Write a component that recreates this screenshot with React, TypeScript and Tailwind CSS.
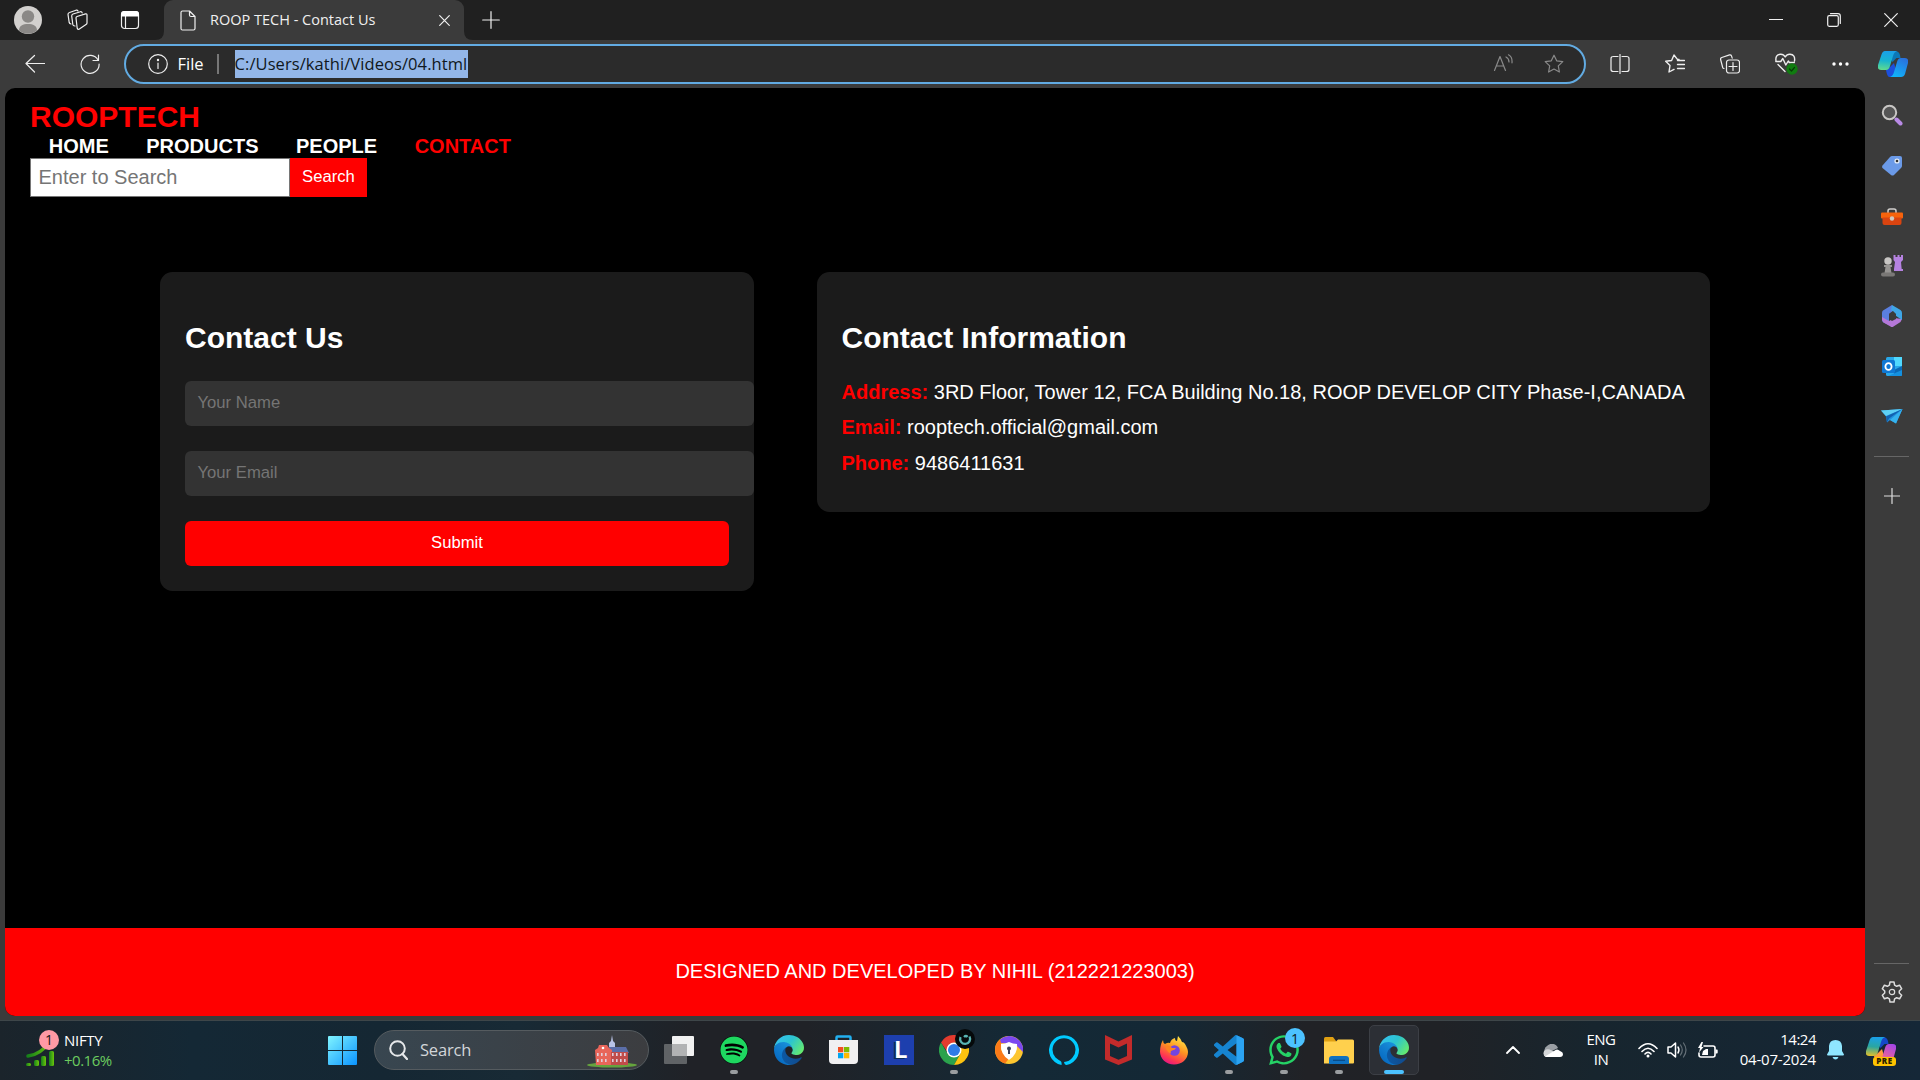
import React from "react";
import { FaSpotify, FaWhatsapp } from "react-icons/fa";

type IconProps = { w?: number; h?: number; box?: string; className?: string; children: React.ReactNode };

function Icon({ w = 20, h = 20, box = "0 0 20 20", className = "", children }: IconProps) {
  return (
    <svg width={w} height={h} viewBox={box} fill="none" stroke="currentColor" strokeWidth={1.2} strokeLinecap="round" strokeLinejoin="round" className={"block shrink-0 " + className}>
      {children}
    </svg>
  );
}

function EdgeLogo({ id }: { id: string }) {
  return (
    <svg width="30" height="30" viewBox="4.63 4.63 256 256" className="block">
      <defs>
        <linearGradient id={id + "a"} x1="0" x2="1"><stop offset="0" stopColor="#0c59a4" /><stop offset="1" stopColor="#114a8b" /></linearGradient>
        <linearGradient id={id + "b"} x1="1" y1="0" x2=".3" y2="1"><stop offset="0" stopColor="#1b9de2" /><stop offset=".5" stopColor="#127fd0" /><stop offset="1" stopColor="#0669c0" /></linearGradient>
        <linearGradient id={id + "c"} x1="0" y1=".2" x2="1" y2=".7"><stop offset="0" stopColor="#35c1f1" /><stop offset=".5" stopColor="#2cc4cf" /><stop offset="1" stopColor="#66eb6e" /></linearGradient>
      </defs>
      <path fill={`url(#${id}a)`} d="M235.68 195.46a93.73 93.73 0 0 1-10.54 4.71 101.87 101.87 0 0 1-35.9 6.46c-47.32 0-88.54-32.55-88.54-74.32A31.48 31.48 0 0 1 117.13 105c-42.8 1.8-53.8 46.4-53.8 72.53 0 73.88 68.09 81.37 82.76 81.37 7.91 0 19.84-2.3 27-4.56l1.31-.44a128.34 128.34 0 0 0 66.6-52.8 4 4 0 0 0-5.32-5.64z" />
      <path fill={`url(#${id}b)`} d="M110.34 246.34A79.2 79.2 0 0 1 87.6 225a80.72 80.72 0 0 1 29.53-120c3.12-1.47 8.45-4.13 15.54-4a32.35 32.35 0 0 1 25.69 13 31.88 31.88 0 0 1 6.36 18.66c0-.21 24.46-79.6-80-79.6-43.9 0-80 41.66-80 78.21a130.15 130.15 0 0 0 12.11 56 128 128 0 0 0 156.38 67.11 75.55 75.55 0 0 1-62.78-8z" />
      <path fill={`url(#${id}c)`} d="M156.94 153.78c-.81 1.05-3.3 2.5-3.3 5.66 0 2.61 1.7 5.12 4.72 7.23 14.38 10 41.49 8.68 41.56 8.68a59.56 59.56 0 0 0 30.27-8.35 61.38 61.38 0 0 0 30.43-52.88c.26-22.41-8-37.31-11.34-43.91C228.09 28.76 182.35 4.63 132.61 4.63a128 128 0 0 0-128 126.2c.48-36.54 36.8-66.05 80-66.05 3.5 0 23.46.34 42 10.07 16.34 8.58 24.9 18.94 30.85 29.21 6.18 10.67 7.28 24.15 7.28 29.52s-2.74 13.33-7.8 20.19z" />
    </svg>
  );
}

function CopilotLogo({ id, pre }: { id: string; pre?: boolean }) {
  return (
    <svg width="30" height="27" viewBox="0 0 30 27" className="block">
      <defs>
        <linearGradient id={id + "l"} x1=".3" y1="0" x2=".2" y2="1"><stop offset="0" stopColor="#1aa0e8" /><stop offset=".5" stopColor={pre ? "#2aa6a0" : "#18b4cf"} /><stop offset="1" stopColor={pre ? "#e6c028" : "#62dc8c"} /></linearGradient>
        <linearGradient id={id + "r"} x1=".8" y1="0" x2=".3" y2="1"><stop offset="0" stopColor={pre ? "#a445e8" : "#2a6fdc"} /><stop offset="1" stopColor={pre ? "#ff6c80" : "#10b4fa"} /></linearGradient>
      </defs>
      <path d="M15 0h3q4 .5 4.500 7h-4l-4 4-3-5z" fill={pre ? "#1548c8" : "#0b78b8"} />
      <path d="M8 19l4-3 4-4 2 7-3 7h-4q-2-1-3-7z" fill={pre ? "#ff9a3c" : "#1c4fdc"} />
      <path d="M7 0h12q-3 1-4 5l-3 10q-1 4-4 4H3q-4 0-3-5L3.500 3.500Q4.500 0 7 0z" fill={`url(#${id}l)`} />
      <path d="M23 26H12q3-1 4-5l3-10q1-4 4-4h4q4 0 3 5l-3 11q-1 3-4 3z" fill={`url(#${id}r)`} />
    </svg>
  );
}

function TabStrip() {
  return (
    <div className="flex h-10 bg-[#202020] text-[#f0f0f0]">
      <div className="flex w-[164px] items-center">
        <svg width="28" height="28" viewBox="0 0 28 28" className="ml-3.5 mr-[25px] block">
          <circle cx="14" cy="14" r="14" fill="#d2d0ce" />
          <circle cx="14" cy="10.500" r="6.200" fill="#8a8886" />
          <path d="M5 24.500c0-5 4-6.500 9-6.500s9 1.500 9 6.500a14 14 0 0 1-18 0z" fill="#8a8886" />
        </svg>
        <Icon w={22} h={22} box="0 0 22 22">
          <path d="M10 7.500l8.500-2.600q1.500-.3 1.500 1.100v8q0 1-1 1.600l-7 4.600q-1.500.5-1.800-1L9 9q0-1.100 1-1.500z" />
          <path d="M8 17q-2-.2-2.200-1.500L4.700 7q0-1.500 1.300-2l7.500-2.300q1.300-.2 1.700 1.200M4 15q-1.500-.2-1.800-1.500L1 5.500Q.9 4 2.500 3.500L9 1.200q1.400-.4 2 .8" />
        </Icon>
        <Icon w={20} h={20} className="ml-[31px]" box="0 0 20 20">
          <rect x="1.500" y="1.500" width="17" height="17" rx="3" />
          <path d="M5.500 6v12" />
          <path d="M4 1h12q3 0 3 3v2.500H1V4q0-3 3-3z" fill="#fff" stroke="none" />
        </Icon>
      </div>
      <div className="relative flex w-[300px] items-center rounded-t-[9px] bg-[#3b3b3b] pl-4">
        <svg width="9" height="9" className="absolute -left-[9px] bottom-0"><path d="M9 0v9H0q9 0 9-9z" fill="#3b3b3b" /></svg>
        <svg width="9" height="9" className="absolute -right-[9px] bottom-0"><path d="M0 0v9h9q-9 0-9-9z" fill="#3b3b3b" /></svg>
        <Icon w={16} h={21} box="0 0 16 21"><path d="M2.500 1h7l5.500 5.500v12q0 1.500-1.500 1.500h-11Q1 20 1 18.500v-16Q1 1 2.500 1zM9.500 1v4q0 1.500 1.500 1.500h4" /></Icon>
        <span className="ml-3.5 w-[233px] whitespace-nowrap font-['Open_Sans',sans-serif] text-[14.500px]">ROOP TECH - Contact Us</span>
        <Icon w={11} h={11} box="0 0 11 11" className="-ml-1"><path d="M.7.7l9.600 9.600M10.300.7L.7 10.300" /></Icon>
      </div>
      <div className="flex flex-1 items-center pl-[18px]">
        <Icon w={18} h={18} box="0 0 18 18"><path d="M9 .7v16.600M.7 9h16.600" /></Icon>
      </div>
      <div className="flex w-[173px] items-center">
        <div className="flex w-[58px] justify-center"><Icon w={14} h={14} box="0 0 14 14"><path d="M.5 6.500h13" /></Icon></div>
        <div className="flex w-[57px] justify-center"><Icon w={14} h={14} box="0 0 14 14"><rect x=".7" y="2.700" width="10.600" height="10.600" rx="1.500" /><path d="M3.500.7H11q2.300 0 2.300 2.300v7.500" /></Icon></div>
        <div className="flex w-[58px] justify-center"><Icon w={14} h={14} box="0 0 14 14"><path d="M.7.7l12.600 12.600M13.300.7L.7 13.300" /></Icon></div>
      </div>
    </div>
  );
}

const star = "M10 1.200l2.700 5.600 6.100.8-4.500 4.300 1.100 6.100-5.400-3-5.400 3 1.100-6.100L1.200 7.600l6.100-.8z";

function Toolbar() {
  return (
    <div className="flex h-12 items-center bg-[#3b3b3b] text-[#eee]">
      <div className="flex w-[124px] items-center pl-[25px]">
        <Icon><path d="M9.500 1.500L1 9.500l8.500 8.500M1 9.500h18.500" /></Icon>
        <Icon className="ml-[35px]"><path d="M18 6a9 9 0 1 0 1.100 4M18.500 1v5.500H13" /></Icon>
      </div>
      <div className="flex h-10 w-[1462px] items-center rounded-full border-2 border-[#62abe2] bg-[#2b2b2b] pl-[21.500px] font-['Open_Sans',sans-serif] text-[16.500px]">
        <Icon><circle cx="10" cy="10" r="9.300" /><path d="M10 9v5.500" /><circle cx="10" cy="6" r=".6" fill="#fff" /></Icon>
        <span className="ml-[10px] w-[39px] text-white">File</span>
        <div className="mr-4 h-5 w-0.5 bg-[#777]" />
        <span className="h-7 w-[233px] whitespace-nowrap bg-[#93b6e8] leading-7 tracking-[0.08px] text-[#101820]">C:/Users/kathi/Videos/04.html</span>
        <div className="ml-auto flex items-center gap-[31px] pr-[20px] text-[#8a8a8a]">
          <Icon w={20} h={20}><path d="M1.500 16.500L7 2.500l5.500 14M3.500 12h7M13 3q3 1.500 3 5M15.500 .8q4 2 3.500 8" /></Icon>
          <Icon><path d={star} /></Icon>
        </div>
      </div>
      <div className="flex flex-1">
        <div className="flex w-[55px] items-center pl-[23.500px]"><Icon><path d="M8 2.500H3.500q-2.500 0-2.500 2v11q0 2 2.500 2H8M12 2.500h4.500q2.500 0 2.500 2v11q0 2-2.500 2H12M10 .5v19" /></Icon></div>
        <div className="flex w-[55px] items-center pl-6"><Icon><path d="M14 5.500l-1.800-.3L9 1 6.600 6.500l-5.900.8L5 11.500 4 18l5-2.600M12.500 6.500h7M12.500 10.500h7M12.500 14.500h7" strokeWidth="1.400" /></Icon></div>
        <div className="flex w-[55px] items-center pl-6"><Icon><path d="M4 14.500q-1 0-1.300-1L.6 5.500Q.3 4 1.800 3.500L9.500.9q1.500-.3 2 1l.7 2.300" /><rect x="6.500" y="6" width="13" height="13" rx="2.500" /><path d="M13 8.500v8M9 12.500h8" /></Icon></div>
        <div className="flex w-[55px] items-center pl-6">
          <Icon w={23} h={22} box="0 0 23 22"><path d="M.8 8.500h5l2-3 3 6.500 2.500-4 1 1.500h5M1 8Q0 1.500 5.500 1.200 8.500 1 10.200 4 12 1 15 1.200 20.500 1.500 19.500 8M3 11.500l7 7" strokeWidth="1.400" /><circle cx="17" cy="16" r="5.700" fill="#107c10" stroke="none" /><path d="M14.500 16l2 2 3-3.500" stroke="#063d06" /></Icon>
        </div>
        <div className="flex w-[57px] items-center pl-[26px]"><svg width="17" height="4" className="block"><circle cx="2" cy="2" r="1.700" fill="#fff" /><circle cx="8.500" cy="2" r="1.700" fill="#fff" /><circle cx="15" cy="2" r="1.700" fill="#fff" /></svg></div>
        <div className="flex items-center pl-[15px]"><CopilotLogo id="cp1" /></div>
      </div>
    </div>
  );
}

function Page() {
  return (
    <main className="flex h-[928px] w-[1860px] flex-col overflow-hidden rounded-[10px] bg-black font-['Liberation_Sans',Arial,sans-serif] text-[20px] text-white">
      <header className="flex flex-col pl-[25px] pt-[12px]">
        <div className="h-[35px] text-[30px] font-bold leading-[34px] text-[#ff0000]">ROOPTECH</div>
        <nav className="flex h-[23px] gap-[37.500px] pl-[18.750px] font-bold leading-[22px]">
          <a>HOME</a><a>PRODUCTS</a><a>PEOPLE</a><a className="text-[#ff0000]">CONTACT</a>
        </nav>
        <div className="flex h-[39px]">
          <div className="w-[260px] border border-[#767676] bg-white pl-[7.500px] leading-[36px] text-[#757575]">Enter to Search</div>
          <button className="w-[77px] bg-[#ff0000] pb-[2px] text-[16.670px] leading-[37px] text-white">Search</button>
        </div>
      </header>
      <section className="mt-[75px] flex items-start gap-[63px] pl-[155px]">
        <div className="h-[319px] w-[594px] rounded-[12.500px] bg-[#1b1b1b] pl-[25px] pt-[48px]">
          <h2 className="h-[35px] text-[30px] font-bold leading-[35px]">Contact Us</h2>
          <div className="mt-[26px] flex flex-col gap-[25px] text-[16.670px] leading-[43px]">
            <div className="h-[45px] rounded-[6px] bg-[#333] pl-[12.500px] text-[#757575]">Your Name</div>
            <div className="h-[45px] rounded-[6px] bg-[#333] pl-[12.500px] text-[#757575]">Your Email</div>
            <button className="h-[45px] w-[544px] rounded-[6px] bg-[#ff0000] pb-0.5 text-center leading-[43px]">Submit</button>
          </div>
        </div>
        <div className="h-[240px] w-[893px] rounded-[12.500px] bg-[#1b1b1b] pl-[24.500px] pt-[48px]">
          <h2 className="h-[35px] text-[30px] font-bold leading-[35px]">Contact Information</h2>
          <div className="mt-[20px] whitespace-nowrap leading-[35.500px]">
            <p className="h-[35px]"><b className="text-[#ff0000]">Address:</b> 3RD Floor, Tower 12, FCA Building No.18, ROOP DEVELOP CITY Phase-I,CANADA</p>
            <p className="h-[36px]"><b className="text-[#ff0000]">Email:</b> rooptech.official@gmail.com</p>
            <p><b className="text-[#ff0000]">Phone:</b> 9486411631</p>
          </div>
        </div>
      </section>
      <footer className="mt-auto h-[88px] bg-[#ff0000] text-center leading-[87px]">DESIGNED AND DEVELOPED BY NIHIL (212221223003)</footer>
    </main>
  );
}

function Sidebar() {
  return (
    <aside className="flex flex-1 flex-col items-center pr-[2px] pt-[2px] text-[#ddd]">
      <div className="flex h-[50px] items-center">
        <svg width="22" height="22" viewBox="0 0 22 22"><circle cx="8.500" cy="8.500" r="6.700" fill="#555" stroke="#c8c6c4" strokeWidth="2" /><path d="M15.500 15.500l4 4" stroke="#b98ae6" strokeWidth="4" strokeLinecap="round" /></svg>
      </div>
      <div className="flex h-[52px] items-center">
        <svg width="22" height="22" viewBox="0 0 22 22"><path d="M11 1h8q2 0 2 2v8q0 1-1 2l-7 7q-1.500 1-3 0L1.500 13q-1-1 0-2.500L9 2q1-1 2-1z" fill="#6b9ae8" /><circle cx="16" cy="6" r="2.600" fill="#e6eef8" /><circle cx="16" cy="6" r="1.300" fill="#333" /></svg>
      </div>
      <div className="flex h-[49px] items-center">
        <svg width="22" height="18" viewBox="0 0 22 18"><path d="M7 6V3q0-2 2-2h4q2 0 2 2v3" fill="none" stroke="#d2d0ce" strokeWidth="1.500" /><rect y="4.500" width="22" height="6" rx="1" fill="#f7630c" /><path d="M1.500 9.500h19V15q0 2-2 2h-15q-2 0-2-2z" fill="#da4410" /><circle cx="11" cy="10.500" r="2.200" fill="#d0c8c0" /></svg>
      </div>
      <div className="flex h-[50px] items-center">
        <svg width="22" height="24" viewBox="0 0 22 24"><path d="M12.500 1h2v2h2V1h2v2h1.500V1h2v5l-2 2 .7 7H22v2H13v-2l1-7-1.500-2z" fill="#b582e0" /><circle cx="7" cy="7" r="3.700" fill="#c8c6c4" /><path d="M3 11h8v2H9.500l1 6H3.500l1-6H3z" fill="#979593" /><rect y="18.500" width="14" height="4" rx="2" fill="#7a7876" /></svg>
      </div>
      <div className="flex h-[50px] items-center">
        <svg width="20" height="22" viewBox="0 0 20 22"><path d="M10 0L1 5.500Q0 6 0 8v7q0 1.500 1.500 2.500L7 20V9l4-3z" fill="#5a7fe0" /><path d="M0 12v3l1.500 2.500 7 4q1.500 1 3 0l7-4.500L20 14l-7.500-1-5.500 3z" fill="#b578d8" /><path d="M10 0l8.500 5Q20 6 20 8v7l-6.500-4.500V9L9 5z" fill="#3fa6e6" /><path d="M7 9l4-3 3 3v5l-4 2-3-2z" fill="#3b3b3b" /></svg>
      </div>
      <div className="flex h-[50px] items-center pt-0.5">
        <svg width="20" height="20" viewBox="0 0 20 20"><rect x="4" width="16" height="19" rx="1.500" fill="#28a8ea" /><path d="M12 0h8v9h-8z" fill="#50d9ff" /><path d="M12 13l8-4v10h-8z" fill="#0a68b5" /><path d="M6 19l14-6v5q0 1-1 1z" fill="#1490df" /><rect y="3" width="13" height="13" rx="1.500" fill="#0f78d4" /><ellipse cx="6.500" cy="9.500" rx="3.100" ry="3.400" fill="none" stroke="#fff" strokeWidth="1.800" /></svg>
      </div>
      <div className="flex h-[50px] items-center">
        <svg width="22" height="15" viewBox="0 0 22 15"><path d="M0 1.500L21.500 0 15 14.500l-6-3.500-3 2.500-1-6z" fill="#1f8fdc" /><path d="M0 1.500L21.500 0 5 7z" fill="#5ed0f5" /><path d="M21.500 0L9 11l6 3.500z" fill="#35b2ee" /><path d="M5 7.500L21.500 0 8 9.500l-2 4z" fill="#1261b0" /></svg>
      </div>
      <div className="mt-[15px] h-px w-[35px] bg-[#666]" />
      <Icon w={16} h={16} box="0 0 16 16" className="mt-[31px]"><path d="M8 .5v15M.5 8h15" /></Icon>
      <div className="mt-auto h-px w-[35px] bg-[#666]" />
      <Icon w={22} h={22} box="0 0 22 22" className="mb-[17px] mt-[17px]">
        <circle cx="11" cy="11" r="2.700" />
        <path d="M9 1h4l.6 3.200 2 1.100 3-1.100 2.100 3.600L18.300 10v2l2.400 2.200-2.100 3.600-3-1.100-2 1.100L13 21H9l-.6-3.200-2-1.100-3 1.100-2.100-3.600L3.700 12v-2L1.300 7.800l2.100-3.600 3 1.100 2-1.100z" strokeWidth="1.500" />
      </Icon>
    </aside>
  );
}

function TaskItem({ children, dot, active }: { children: React.ReactNode; dot?: boolean; active?: boolean }) {
  return (
    <div className="relative flex h-[58px] w-[55px] items-center justify-center">
      {active && <div className="absolute inset-x-[2.500px] inset-y-1 rounded-[5px] border border-[#3c3f45] bg-[#2c2f35]" />}
      <div className="relative">{children}</div>
      {dot && <div className="absolute bottom-[5px] h-1 w-2 rounded-full bg-[#9a9da0]" />}
      {active && <div className="absolute bottom-[5px] h-1 w-5 rounded-full bg-[#4cc2ff]" />}
    </div>
  );
}

function Badge({ children }: { children: React.ReactNode }) {
  return <div className="absolute -right-[6px] -top-[5px] flex h-5 w-5 items-center justify-center rounded-full bg-[#4cc2ff] text-[14px] text-[#101820]">{children}</div>;
}

function Building() {
  const windows = [9, 13, 17, 24, 28, 32, 36];
  return (
    <svg width="50" height="33" viewBox="0 0 50 33" className="block">
      <ellipse cx="25" cy="30" rx="25" ry="2.600" fill="#65a33e" />
      <path d="M25 0l1 6 2 2v5h-6V8l2-2z" fill="#b9c3e6" />
      <path d="M22 12h17l3 6H20z" fill="#5b6ea8" />
      <path d="M8 15l3-2 1-3h8l2 3 3 2v15H9z" fill="#e8655a" />
      <path d="M24 17h17v13H24z" fill="#c04c4a" />
      {windows.map((x) => (
        <g key={x} fill="#e0cfdc"><rect x={x + 1} y="18" width="1.600" height="3" /><rect x={x + 1} y="24" width="1.600" height="3" /></g>
      ))}
      <circle cx="16" cy="13" r="1.300" fill="#fff" />
    </svg>
  );
}

function Taskbar() {
  return (
    <div className="flex h-[60px] items-center border-t border-[#3e4649] bg-linear-[90deg,#1b242b_0%,#142835_10%,#152733_20%,#182a35_27%,#202227_36%,#202227_42%,#142936_53%,#142835_61%,#212226_68%,#202226_75%,#17252e_83%,#152737_100%] pb-px font-['Open_Sans',sans-serif] text-[15px] text-white">
      <div className="flex w-[328px] pl-[26px]">
        <div className="relative h-9 w-7">
          <svg width="28" height="36" viewBox="0 0 28 36">
            <defs><linearGradient id="bars"><stop stopColor="#16811a" /><stop offset="1" stopColor="#6cc60c" /></linearGradient></defs>
            <path d="M2 25q12-1 23-15" fill="none" stroke="url(#bars)" strokeWidth="3.500" strokeLinecap="round" />
            <g fill="url(#bars)"><rect y="32" width="5" height="3" rx="1.500" /><rect x="8" y="29" width="5" height="6" rx="1.500" /><rect x="15" y="25" width="5" height="10" rx="1.500" /><rect x="23" y="20" width="5" height="15" rx="1.500" /></g>
          </svg>
          <div className="absolute -top-px left-[13px] flex h-5 w-5 items-center justify-center rounded-full bg-[#ff99a4] text-[14px] text-[#201416]">1</div>
        </div>
        <div className="-mt-px ml-[10px] leading-5">
          <div className="text-[15px] tracking-[-0.3px]">NIFTY</div>
          <div className="text-[15px] tracking-[-0.5px] text-[#6ccb5f]">+0.16%</div>
        </div>
      </div>
      <svg width="29" height="29" viewBox="0 0 29 29" className="block">
        <defs><linearGradient id="win" gradientUnits="userSpaceOnUse" x1="0" y1="0" x2="29" y2="29"><stop stopColor="#80f4ff" /><stop offset="1" stopColor="#0a93ff" /></linearGradient></defs>
        <g fill="url(#win)"><path d="M1 0h13v14H0V1q0-1 1-1zM15 0h13q1 0 1 1v13H15zM0 15h14v14H1q-1 0-1-1zM15 15h14v13q0 1-1 1H15z" /></g>
      </svg>
      <div className="ml-[17px] flex h-10 w-[275px] items-center rounded-full border border-[#555b5f] bg-linear-to-r from-[#384650] to-[#3c3d40] pl-3.5">
        <svg width="19" height="20" viewBox="0 0 19 20"><circle cx="8.500" cy="8.500" r="7.300" fill="none" stroke="#e6e8ea" strokeWidth="2" /><path d="M13.500 14l4.500 5" stroke="#e6e8ea" strokeWidth="2.200" strokeLinecap="round" /></svg>
        <span className="ml-3 text-[16.500px] tracking-[-0.2px] text-[#d2d6d9]">Search</span>
        <div className="ml-auto mr-[11px] mt-0.5"><Building /></div>
      </div>
      <div className="ml-[2.500px] flex">
        <TaskItem><svg width="30" height="28" viewBox="0 0 30 28" className="block"><rect y="8" width="23" height="20" rx="1" fill="#606366" /><rect x="8" width="22" height="20" rx="1" fill="#f1f1f1" /><path d="M8 8h15v12H8z" fill="#b2b3b4" /></svg></TaskItem>
        <TaskItem dot><div className="rounded-full bg-black"><FaSpotify size={28} color="#1ed760" className="block" /></div></TaskItem>
        <TaskItem><EdgeLogo id="e1" /></TaskItem>
        <TaskItem><svg width="29" height="30" viewBox="0 0 29 30" className="-ml-px block"><path d="M7.500 6V2.500q0-1 1-1h12q1 0 1 1V6" fill="none" stroke="#22b0f0" strokeWidth="2.500" /><path d="M0 5h29v20q0 4-4 4H4q-4 0-4-4z" fill="#f0f0f1" /><path d="M9 12h5.300v5.300H9z" fill="#f25022" /><path d="M15 12h5.300v5.300H15z" fill="#7fba00" /><path d="M9 18h5.300v5.300H9z" fill="#00a4ef" /><path d="M15 18h5.300v5.300H15z" fill="#ffb900" /></svg></TaskItem>
        <TaskItem><div className="flex h-[30px] w-[30px] items-center justify-center bg-[#1d3fae] pl-1 font-['Inter',sans-serif] text-[23px] font-bold leading-none text-white [text-shadow:-2px_1px_0_#0b2c58]">L</div></TaskItem>
        <TaskItem dot>
          <svg width="30" height="30" viewBox="0 0 30 30" className="block"><path d="M2 7.500A15 15 0 0 1 28 7.500H15L9 18z" fill="#e33b2e" /><path d="M2 7.500A15 15 0 0 0 15 30l6.500-11.500H8.500z" fill="#2ba24c" /><path d="M28 7.500A15 15 0 0 1 15 30l6.500-11.500L15 7.500z" fill="#fdc310" /><circle cx="15" cy="15" r="7.500" fill="#fff" /><circle cx="15" cy="15" r="6" fill="#2f7be8" /></svg>
          <svg width="20" height="20" viewBox="0 0 20 20" className="absolute -right-[6px] -top-[6px]"><circle cx="10" cy="10" r="10" fill="#05090a" /><path d="M5.500 8a5 5 0 1 0 9-.5M9 8q2-2 3.500 0" fill="none" stroke="#58b4b2" strokeWidth="2.300" /></svg>
        </TaskItem>
        <TaskItem><svg width="28" height="28" viewBox="0 0 28 28" className="block"><circle cx="14" cy="14" r="14" fill="#fdc62f" /><path d="M5 3.500A14 14 0 0 1 28 16L20 8 5 7z" fill="#7b48f0" /><path d="M5 3.500A14 14 0 0 0 10 27.500l4-5L6 14V7z" fill="#fb7a18" /><path d="M6 8q4 0 8-2 4 2 8 2 1 10-8 16Q5 18 6 8z" fill="#fff" /><circle cx="14" cy="12.500" r="2" fill="#3a4058" /><path d="M13 13h2v5h-2z" fill="#3a4058" /></svg></TaskItem>
        <TaskItem><svg width="30" height="30" viewBox="0 0 30 30" className="block"><path d="M12.500 30A15 15 0 1 1 17.500 30Q15.500 30 15 27q5.500-.5 8.500-4.500a11.500 11.500 0 1 0-17 0q3 2.500 5 3.500 1.500 1 1 4z" fill="#00caff" /></svg></TaskItem>
        <TaskItem><svg width="27" height="30" viewBox="0 0 27 30" className="-ml-px block"><path d="M0 0l13.500 6.500L27 0v24.500L13.500 30 0 24.500zM5 8.500v12.500l8.500 3.700L22 21V8.500l-8.500 4z" fill="#c22b2b" fillRule="evenodd" /></svg></TaskItem>
        <TaskItem><svg width="28" height="29" viewBox="0 0 28 29" className="-ml-px block"><defs><linearGradient id="fx" x1=".8" y1="0" x2=".3" y2="1"><stop stopColor="#fff04a" /><stop offset=".45" stopColor="#ff9421" /><stop offset=".8" stopColor="#ff3850" /><stop offset="1" stopColor="#e31587" /></linearGradient></defs><path d="M3 4q0 3 2 4 3-2 5-1 1-4 5-5 0 3 2 3l1-5q3 3 4 6 2 0 3 2 3 5 3 8c0 7-6 12.500-14 12.500S0 22.500 0 15.500Q0 9 3 4z" fill="url(#fx)" /><circle cx="14.500" cy="14.500" r="5.300" fill="#7445df" /><path d="M5 10q5-1 7 2h4q-1 2-4 2.500-2 .5-1 3-4-1-6-7.500z" fill="#ff8420" /></svg></TaskItem>
        <TaskItem dot><svg width="30" height="30" viewBox="0 0 24 24" className="block"><path fill="#1684d0" d="M23.150 2.587L18.210.21a1.494 1.494 0 0 0-1.705.29l-9.460 8.630-4.120-3.128a.999.999 0 0 0-1.276.057L.327 7.261A1 1 0 0 0 .326 8.740L3.899 12 .326 15.260a1 1 0 0 0 .001 1.479L1.650 17.940a.999.999 0 0 0 1.276.057l4.120-3.128 9.460 8.630a1.492 1.492 0 0 0 1.704.29l4.942-2.377A1.500 1.500 0 0 0 24 20.060V3.939a1.500 1.500 0 0 0-.85-1.352zm-5.146 14.861L10.826 12l7.178-5.448v10.896z" /><path d="M18 .1l5.200 2.500q.8.400.8 1.400v16q0 1-.8 1.400L18 23.900z" fill="#2ba3f2" /></svg></TaskItem>
        <TaskItem dot><FaWhatsapp size={34} color="#25d366" className="-mx-0.5 block" /><Badge>1</Badge></TaskItem>
        <TaskItem dot><svg width="30" height="27" viewBox="0 0 30 27" className="block"><path d="M0 1.500Q0 0 1.500 0H9l3 4v4H0z" fill="#e0a012" /><path d="M0 4.500h12l2-2h14.500Q30 2.500 30 4v21.500q0 1-1 1H0z" fill="#ffd04d" /><path d="M5 27v-5q0-3 3-3h14q3 0 3 3v5z" fill="#0f71c0" /><path d="M9 23.300h12" stroke="#0a4a85" strokeWidth="1.300" /></svg></TaskItem>
        <TaskItem active><EdgeLogo id="e2" /></TaskItem>
      </div>
      <div className="ml-auto flex w-[420px] items-center">
        <Icon w={14} h={8} box="0 0 14 8" className="ml-[6px]"><path d="M1 7l6-6 6 6" strokeWidth="1.800" /></Icon>
        <svg width="21" height="13" viewBox="0 0 21 13" className="ml-[22px] block"><path d="M4 10a5 5 0 0 1 1-8 6.500 6.500 0 0 1 11 2z" fill="#9a9fa4" /><path d="M4 13a4 4 0 0 1 0-7.500q3-1 5 .8L15 9z" fill="#d4d6d8" /><path d="M3 12.500L12 7q3-3 6 0 3 1 3 3 0 3-3 3H4z" fill="#fff" /></svg>
        <div className="-mt-[2px] ml-[20px] w-[36px] text-center leading-5 tracking-[-0.5px]"><div>ENG</div><div>IN</div></div>
        <Icon w={20} h={16} box="0 0 20 16" className="ml-[19px]"><path d="M1 6.500Q10-3 19 6.500M4 9.500q6-6.500 12 0M7 12q3-3.300 6 0" strokeWidth="1.600" /><circle cx="10" cy="14" r="1.500" fill="#fff" stroke="none" /></Icon>
        <Icon w={21} h={18} box="0 0 21 18" className="ml-[9px]"><path d="M1 6h3l4.500-4v14L4 12H1z" strokeWidth="1.500" /><path d="M11 6q2 3 0 6" strokeWidth="1.400" /><path d="M13.500 4q3.500 5 0 10M16.500 2q5 7 0 14" stroke="#657078" /></Icon>
        <Icon w={21} h={17} box="0 0 21 17" className="ml-[9px]"><path d="M7 4h9q2 0 2 2v7q0 2-2 2H4q-2 0-2-2v-2" strokeWidth="1.600" /><path d="M4.500 0L1 6h2l-1 4.500L6.500 5h-2L6 0zM5 13l1-4 3-2h2v6zM18.500 7.500H20q.7 0 .7 1v2q0 1-.7 1h-1.500z" fill="#fff" stroke="none" /></Icon>
        <div className="-mt-[2px] ml-auto pr-[11px] text-right leading-5"><div className="tracking-[-0.5px]">14:24</div><div className="tracking-[-0.2px]">04-07-2024</div></div>
        <svg width="17" height="20" viewBox="0 0 17 20" className="mr-[22px] block"><path d="M8.500 0q6 0 6.500 6v5l2 3.500q0 1-1 1H1q-1 0-1-1L2 11V6q.5-6 6.500-6zM5.500 17h6q-1 2.500-3 2.500t-3-2.500z" fill="#8fe6ff" /></svg>
        <div className="relative mr-[24px]">
          <CopilotLogo id="cp2" pre />
          <div className="absolute -bottom-[2px] left-[7px] flex h-[9px] w-[23px] items-center justify-center rounded-[3px] bg-[#ffc300] text-[8px] font-extrabold leading-none tracking-[0.5px] text-[#2a1e00]">PRE</div>
        </div>
      </div>
    </div>
  );
}

export default function App() {
  return (
    <div className="flex h-[1080px] w-[1920px] flex-col overflow-hidden bg-[#3b3b3b]">
      <TabStrip />
      <Toolbar />
      <div className="flex h-[932px] pl-[5px]">
        <Page />
        <Sidebar />
      </div>
      <Taskbar />
    </div>
  );
}
